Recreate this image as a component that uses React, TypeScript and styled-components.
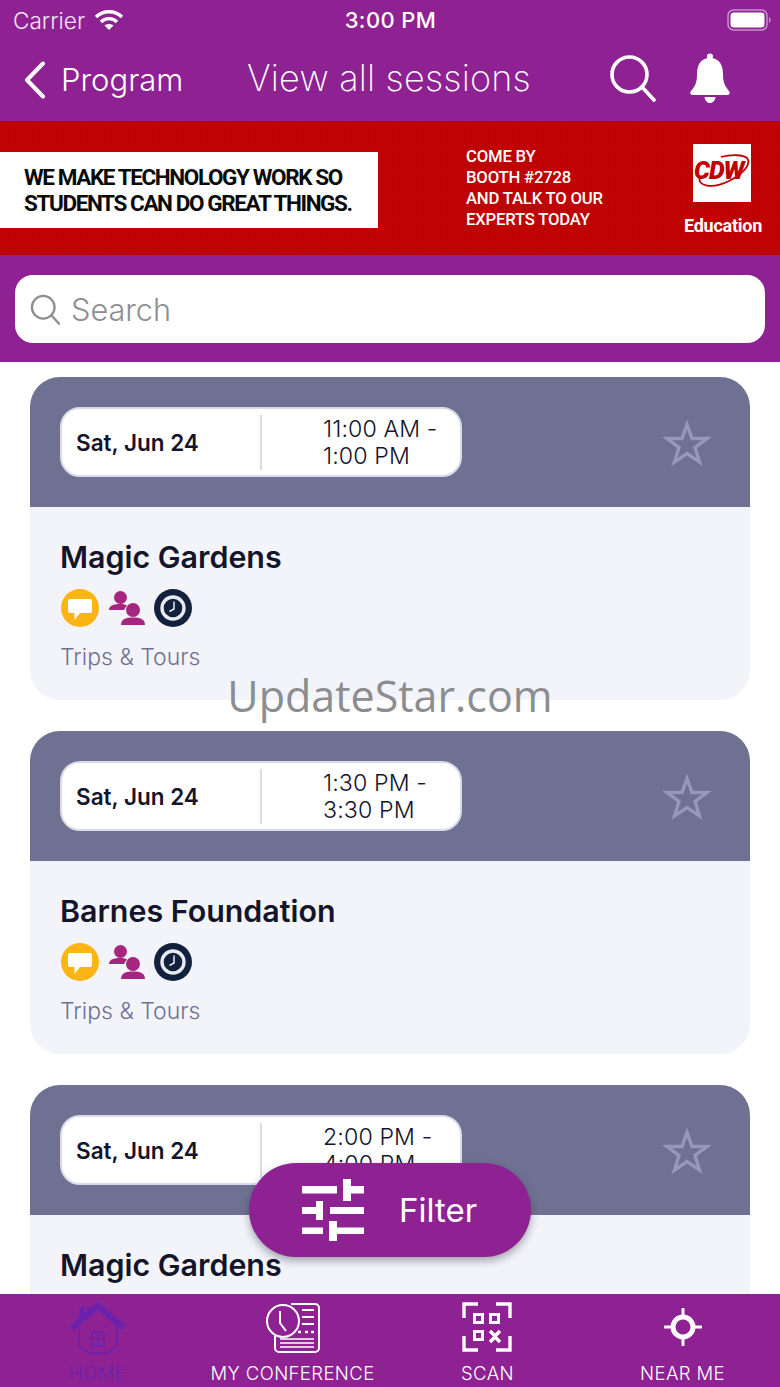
import React from 'react';
import styled, { createGlobalStyle } from 'styled-components';

const PURPLE = '#8e2292';

const GlobalStyle = createGlobalStyle`
  html, body {
    margin: 0;
    padding: 0;
    background: #fff;
    font-family: Inter, "Noto Sans", sans-serif;
  }
  * { box-sizing: border-box; }
`;

const Page = styled.div`
  position: relative;
  width: 780px;
  height: 1387px;
  display: flex;
  flex-direction: column;
  overflow: hidden;
  background: #fff;
`;

const Header = styled.header`
  height: 121px;
  flex: none;
  background: ${PURPLE};
  color: #fff;
  display: flex;
  flex-direction: column;
`;

const StatusBar = styled.div`
  height: 40px;
  padding: 0 8px 0 13px;
  display: grid;
  grid-template-columns: 1fr auto 1fr;
  align-items: center;
`;

const StatusLeft = styled.div`
  display: flex;
  align-items: center;
  gap: 9px;
  font-family: Inter, sans-serif;
  font-size: 22.6px;
  font-weight: 300;
  color: #f4e6f5;
`;

const Clock = styled.div`
  margin-right: 4px;
  font-size: 22px;
  font-weight: 500;
  letter-spacing: 0.4px;
`;

const StatusRight = styled.div`
  display: flex;
  justify-content: flex-end;
`;

const NavBar = styled.nav`
  flex: 1;
  display: flex;
  align-items: center;
  padding: 0 44px 6px 24px;
`;

const BackLink = styled.div`
  display: flex;
  align-items: center;
  width: 223px;
  font-size: 31px;
  font-weight: 300;
  gap: 15px;
  padding-top: 4px;
`;

const NavTitle = styled.div`
  font-size: 36px;
  font-weight: 200;
  letter-spacing: 0.2px;
  margin-right: 78px;
`;

const NavIcons = styled.div`
  display: flex;
  align-items: center;
  gap: 32px;
`;

const Banner = styled.section`
  height: 134px;
  flex: none;
  padding-top: 4px;
  background-color: #bf0202;
  background-image: radial-gradient(rgba(120, 0, 0, 0.08) 1px, transparent 1.5px);
  background-size: 6px 6px;
  display: flex;
  align-items: center;
  color: #fff;
  font-family: Roboto, sans-serif;
`;

const Slogan = styled.div`
  width: 378px;
  height: 76px;
  flex: none;
  background: #fff;
  color: #0b0b0b;
  font-size: 22.5px;
  font-weight: 700;
  line-height: 26px;
  letter-spacing: -1.4px;
  padding: 12px 0 0 24px;
  white-space: nowrap;
`;

const Booth = styled.div`
  margin: -4px 0 0 88px;
  width: 216px;
  font-size: 16.7px;
  font-weight: 500;
  line-height: 21px;
  letter-spacing: -0.2px;
  white-space: nowrap;
`;

const Brand = styled.div`
  display: flex;
  flex-direction: column;
  align-items: center;
  gap: 13px;
  font-size: 18px;
  font-weight: 700;
  letter-spacing: -0.25px;
  width: 82px;
`;

const LogoBox = styled.div`
  position: relative;
  width: 58px;
  height: 58px;
  margin-right: 2px;
  background: #fff;
`;

const LogoMark = styled.svg`
  position: absolute;
  left: 0;
  top: 0;
`;

const LogoWord = styled.span`
  position: absolute;
  left: 1px;
  top: 15px;
  color: #c00000;
  font-family: Roboto, sans-serif;
  font-size: 25px;
  line-height: 24px;
  font-weight: 900;
  font-style: italic;
  letter-spacing: -1px;
`;

const SearchBand = styled.div`
  height: 107px;
  flex: none;
  background: ${PURPLE};
  padding: 20px 15px 19px;
`;

const SearchBox = styled.div`
  height: 68px;
  background: #fff;
  border-radius: 18px;
  display: flex;
  align-items: center;
  gap: 10px;
  padding: 0 15px;
  color: #8e8e92;
  font-size: 30.7px;
  font-weight: 300;
`;

const List = styled.main`
  flex: 1;
  min-height: 0;
  overflow: hidden;
  padding: 15px 30px 0;
  display: flex;
  flex-direction: column;
  gap: 31px;
`;

const Card = styled.article`
  flex: none;
  height: 323px;
  border-radius: 30px;
  overflow: hidden;
  background: #f3f4fa;
  display: flex;
  flex-direction: column;
`;

const CardHead = styled.div`
  height: 130px;
  flex: none;
  background: #6e7191;
  display: flex;
  align-items: flex-start;
  justify-content: space-between;
  padding: 30px 39px 0 30px;
`;

const TimePill = styled.div`
  width: 402px;
  height: 70px;
  background: #fff;
  border: 2px solid #d9dbea;
  border-radius: 20px;
  display: flex;
  align-items: center;
  color: #14142b;
`;

const DateCell = styled.div`
  width: 200px;
  height: 55px;
  flex: none;
  display: flex;
  align-items: center;
  padding-left: 14px;
  border-right: 2px solid #d9dbe6;
  font-size: 22.5px;
  font-weight: 600;
`;

const TimeCell = styled.div`
  padding: 1px 0 0 61px;
  font-size: 23.2px;
  font-weight: 300;
  line-height: 27px;
  letter-spacing: 0.1px;
  white-space: nowrap;
`;

const FavStar = styled.svg`
  margin-top: 13px;
  flex: none;
`;

const CardBody = styled.div`
  flex: 1;
  padding: 31px 30px 0;
`;

const CardTitle = styled.h2`
  margin: 0;
  font-size: 30.4px;
  line-height: 38px;
  font-weight: 600;
  color: #14142b;
`;

const Badges = styled.div`
  display: flex;
  align-items: center;
  gap: 9.5px;
  margin: 13px 0 0 1px;
`;

const Category = styled.div`
  margin-top: 15px;
  font-size: 23px;
  line-height: 30px;
  font-weight: 300;
  color: #6e7191;
`;

const Watermark = styled.div`
  position: absolute;
  left: 0;
  right: 0;
  top: 668px;
  text-align: center;
  font-family: "Open Sans", sans-serif;
  font-size: 43px;
  line-height: 56px;
  color: #8b8d90;
  pointer-events: none;
`;

const FilterButton = styled.button`
  position: absolute;
  left: 249px;
  top: 1163px;
  width: 282px;
  height: 94px;
  border: 0;
  border-radius: 47px;
  background: ${PURPLE};
  box-shadow: 0 4px 8px rgba(40, 40, 60, 0.4);
  color: #fff;
  font-family: Inter, sans-serif;
  font-size: 33px;
  font-weight: 400;
  display: flex;
  align-items: center;
  gap: 35px;
  padding: 0 0 0 53px;
`;

const TabBar = styled.footer`
  height: 93px;
  flex: none;
  position: relative;
  background: ${PURPLE};
  display: grid;
  grid-template-columns: repeat(4, 1fr);
`;

const Tab = styled.div<{ $active?: boolean }>`
  display: flex;
  flex-direction: column;
  align-items: center;
  padding-top: 8px;
  color: ${p => (p.$active ? '#6a22ae' : '#fff')};
  font-size: 18.5px;
  line-height: 22px;
  font-weight: 300;
  letter-spacing: 0.4px;
  white-space: nowrap;
`;

const TabIcon = styled.div<{ $offset?: number }>`
  height: 60px;
  padding-top: ${p => p.$offset ?? 0}px;
  display: flex;
  align-items: flex-start;
  justify-content: center;
`;

const WifiIcon = () => (
  <svg width="30" height="22" viewBox="0 0 30 22" fill="none" stroke="#fff" strokeWidth="3.4">
    <path d="M2 8 C9 1 21 1 28 8" />
    <path d="M7 13 C11 8.5 19 8.5 23 13" />
    <path d="M15 21 L10.5 16.5 C13 14.5 17 14.5 19.5 16.5 Z" fill="#fff" stroke="none" />
  </svg>
);

const BatteryIcon = () => (
  <svg width="45" height="22" viewBox="0 0 45 22">
    <rect x="1" y="1" width="39" height="20" rx="5.5" fill="none" stroke="#c890cb" strokeWidth="1.5" />
    <rect x="3.5" y="3.5" width="34" height="15" rx="3.5" fill="#fff" />
    <path d="M42 8 C44 8.6 44 13.4 42 14 Z" fill="#c890cb" />
  </svg>
);

const BackChevron = () => (
  <svg width="22" height="38" viewBox="0 0 22 38" fill="none" stroke="#fff" strokeWidth="4" strokeLinecap="round" strokeLinejoin="round">
    <path d="M19 2.5 L3 19 L19 35.5" />
  </svg>
);

const SearchIcon = ({ size, color, width }: { size: number; color: string; width: number }) => (
  <svg width={size} height={size} viewBox="0 0 48 48" fill="none" stroke={color} strokeWidth={width} strokeLinecap="round">
    <circle cx="20.5" cy="20.5" r="17.5" />
    <path d="M33 33 L45 46" />
  </svg>
);

const BellIcon = () => (
  <svg width="42" height="50" viewBox="0 0 42 50" fill="#fff">
    <circle cx="21" cy="3.5" r="3" />
    <path d="M21 5 C11 5 8 13 8 21 C8 30 6 33 2 38 C0.5 40 1.5 42 4 42 H38 C40.5 42 41.5 40 40 38 C36 33 34 30 34 21 C34 13 31 5 21 5 Z" />
    <path d="M15.5 44 H26.5 C26 47.5 24 50 21 50 C18 50 16 47.5 15.5 44 Z" />
  </svg>
);

const StarOutline = () => (
  <FavStar width="48" height="46" viewBox="0 0 48 46" fill="none" stroke="#9598b6" strokeWidth="3.4" strokeLinejoin="miter">
    <path d="M24 4.5 L29 18.5 L44 18.5 L32 27.5 L36.5 42 L24 33.5 L11.5 42 L16 27.5 L4 18.5 L19 18.5 Z" />
  </FavStar>
);

const ChatBadge = () => (
  <svg width="38" height="38" viewBox="0 0 38 38">
    <circle cx="19" cy="19" r="19" fill="#fdb515" />
    <path d="M9 10 H29 A2 2 0 0 1 31 12 V22 A2 2 0 0 1 29 24 H19 L13.5 31 L13.5 24 H9 A2 2 0 0 1 7 22 V12 A2 2 0 0 1 9 10 Z" fill="#fff" />
  </svg>
);

const PeopleBadge = () => (
  <svg width="36" height="36" viewBox="0 0 36 36" fill="#a6267f">
    <circle cx="11.5" cy="7.5" r="6.5" />
    <path d="M0 20 C0 15.5 5 14 11.5 14 C15 14 17 14.6 18 15.5 C16.5 17 16 18.5 15 20 Z" />
    <circle cx="24" cy="20" r="7" />
    <path d="M12 35 C12 29 17 27.5 24 27.5 C31 27.5 36 29 36 35 Z" />
  </svg>
);

const ClockBadge = () => (
  <svg width="38" height="38" viewBox="0 0 38 38" fill="none">
    <circle cx="19" cy="19" r="19" fill="#14213d" />
    <circle cx="19" cy="19" r="11" stroke="#e8ecf2" strokeWidth="3.4" />
    <path d="M20 12.5 V20 L15.5 22.5" stroke="#e8ecf2" strokeWidth="1.5" />
  </svg>
);

const SlidersIcon = () => (
  <svg width="62" height="62" viewBox="0 0 62 62" fill="#fff">
    <rect x="0" y="7" width="35" height="7.5" />
    <rect x="41" y="0" width="8" height="22" />
    <rect x="49" y="7" width="13" height="7.5" />
    <rect x="0" y="28" width="14" height="7" />
    <rect x="14" y="22" width="7" height="19" />
    <rect x="28" y="28" width="34" height="7" />
    <rect x="0" y="48.5" width="21" height="6.5" />
    <rect x="27" y="42" width="8" height="20" />
    <rect x="35" y="48.5" width="27" height="6.5" />
  </svg>
);

const HomeIcon = () => (
  <svg width="56" height="54" viewBox="0 0 56 54" fill="none" stroke="#6a22ae">
    <path d="M2 26 L28 4 L54 26" strokeWidth="6" />
    <path d="M12 5 V15 M19 5 V10" strokeWidth="5" />
    <path d="M9 24 V44 L19 51 H37 L47 44 V24" strokeWidth="1.5" />
    <path d="M22 30 H34 V44 H22 Z M28 30 V44 M22 37 H34" strokeWidth="1.5" />
  </svg>
);

const ConferenceIcon = () => (
  <svg width="56" height="52" viewBox="0 0 56 52" fill="none" stroke="#fff" strokeWidth="2">
    <path d="M26 2 H50 A4 4 0 0 1 54 6 V46 A4 4 0 0 1 50 50 H14 A4 4 0 0 1 10 46 V34" />
    <circle cx="18" cy="19" r="16" />
    <path d="M15 9 V21 L21 29" />
    <path d="M37 8 H49 M37 15 H49 M37 22 H49" />
    <path d="M33 30 H36 M40 30 H43 M46 30 H49" strokeWidth="2.4" />
    <path d="M15 37 H49 M15 41 H49 M15 45 H49" strokeWidth="1.5" />
  </svg>
);

const ScanIcon = () => (
  <svg width="52" height="52" viewBox="0 0 52 52" fill="none" stroke="#fff">
    <path d="M16 2 H2 V16 M34 2 H48 V16 M2 34 V48 H16 M48 34 V48 H34" strokeWidth="3.4" />
    <rect x="12.5" y="12.5" width="8" height="8" strokeWidth="3" />
    <rect x="28.5" y="12.5" width="8" height="8" strokeWidth="3" />
    <rect x="12.5" y="29.5" width="8" height="8" strokeWidth="3" />
    <path d="M28 29 L33 34 L38 29 M28 40 L33 35 L38 40" strokeWidth="3.4" />
  </svg>
);

const NearMeIcon = () => (
  <svg width="38" height="38" viewBox="0 0 38 38" fill="none" stroke="#fff" strokeLinecap="round">
    <circle cx="19" cy="19" r="10" strokeWidth="5" />
    <path d="M19 1 V9 M19 29 V37 M1 19 H9 M29 19 H37" strokeWidth="3" />
  </svg>
);

const sessions = [
  { title: 'Magic Gardens', start: '11:00 AM -', end: '1:00 PM' },
  { title: 'Barnes Foundation', start: '1:30 PM -', end: '3:30 PM' },
  { title: 'Magic Gardens', start: '2:00 PM -', end: '4:00 PM' },
];

const App: React.FC = () => {
  return (
    <Page>
      <GlobalStyle />
      <Header>
        <StatusBar>
          <StatusLeft>
            Carrier
            <WifiIcon />
          </StatusLeft>
          <Clock>3:00 PM</Clock>
          <StatusRight>
            <BatteryIcon />
          </StatusRight>
        </StatusBar>
        <NavBar>
          <BackLink>
            <BackChevron />
            Program
          </BackLink>
          <NavTitle>View all sessions</NavTitle>
          <NavIcons>
            <SearchIcon size={48} color="#fff" width={3.6} />
            <BellIcon />
          </NavIcons>
        </NavBar>
      </Header>

      <Banner>
        <Slogan>
          WE MAKE TECHNOLOGY WORK SO
          <br />
          STUDENTS CAN DO GREAT THINGS.
        </Slogan>
        <Booth>
          COME BY
          <br />
          BOOTH #2728
          <br />
          AND TALK TO OUR
          <br />
          EXPERTS TODAY
        </Booth>
        <Brand>
          <LogoBox>
            <LogoMark width="58" height="58" viewBox="0 0 58 58" fill="none" stroke="#c00000" strokeWidth="1.8">
              <path d="M7 32 C3 43 20 45 36 37 C50 30 59 20 54 14 C50 11 40 10 28 13" />
            </LogoMark>
            <LogoWord>CDW</LogoWord>
          </LogoBox>
          Education
        </Brand>
      </Banner>

      <SearchBand>
        <SearchBox>
          <SearchIcon size={31} color="#8e8e92" width={3.6} />
          Search
        </SearchBox>
      </SearchBand>

      <List>
        {sessions.map((s, i) => (
          <Card key={i}>
            <CardHead>
              <TimePill>
                <DateCell>Sat, Jun 24</DateCell>
                <TimeCell>
                  {s.start}
                  <br />
                  {s.end}
                </TimeCell>
              </TimePill>
              <StarOutline />
            </CardHead>
            <CardBody>
              <CardTitle>{s.title}</CardTitle>
              <Badges>
                <ChatBadge />
                <PeopleBadge />
                <ClockBadge />
              </Badges>
              <Category>Trips &amp; Tours</Category>
            </CardBody>
          </Card>
        ))}
      </List>

      <TabBar>
        <Tab $active>
          <TabIcon>
            <HomeIcon />
          </TabIcon>
          HOME
        </Tab>
        <Tab>
          <TabIcon>
            <ConferenceIcon />
          </TabIcon>
          MY CONFERENCE
        </Tab>
        <Tab>
          <TabIcon>
            <ScanIcon />
          </TabIcon>
          SCAN
        </Tab>
        <Tab>
          <TabIcon $offset={6}>
            <NearMeIcon />
          </TabIcon>
          NEAR ME
        </Tab>
      </TabBar>

      <Watermark>UpdateStar.com</Watermark>
      <FilterButton>
        <SlidersIcon />
        Filter
      </FilterButton>
    </Page>
  );
};

export default App;
